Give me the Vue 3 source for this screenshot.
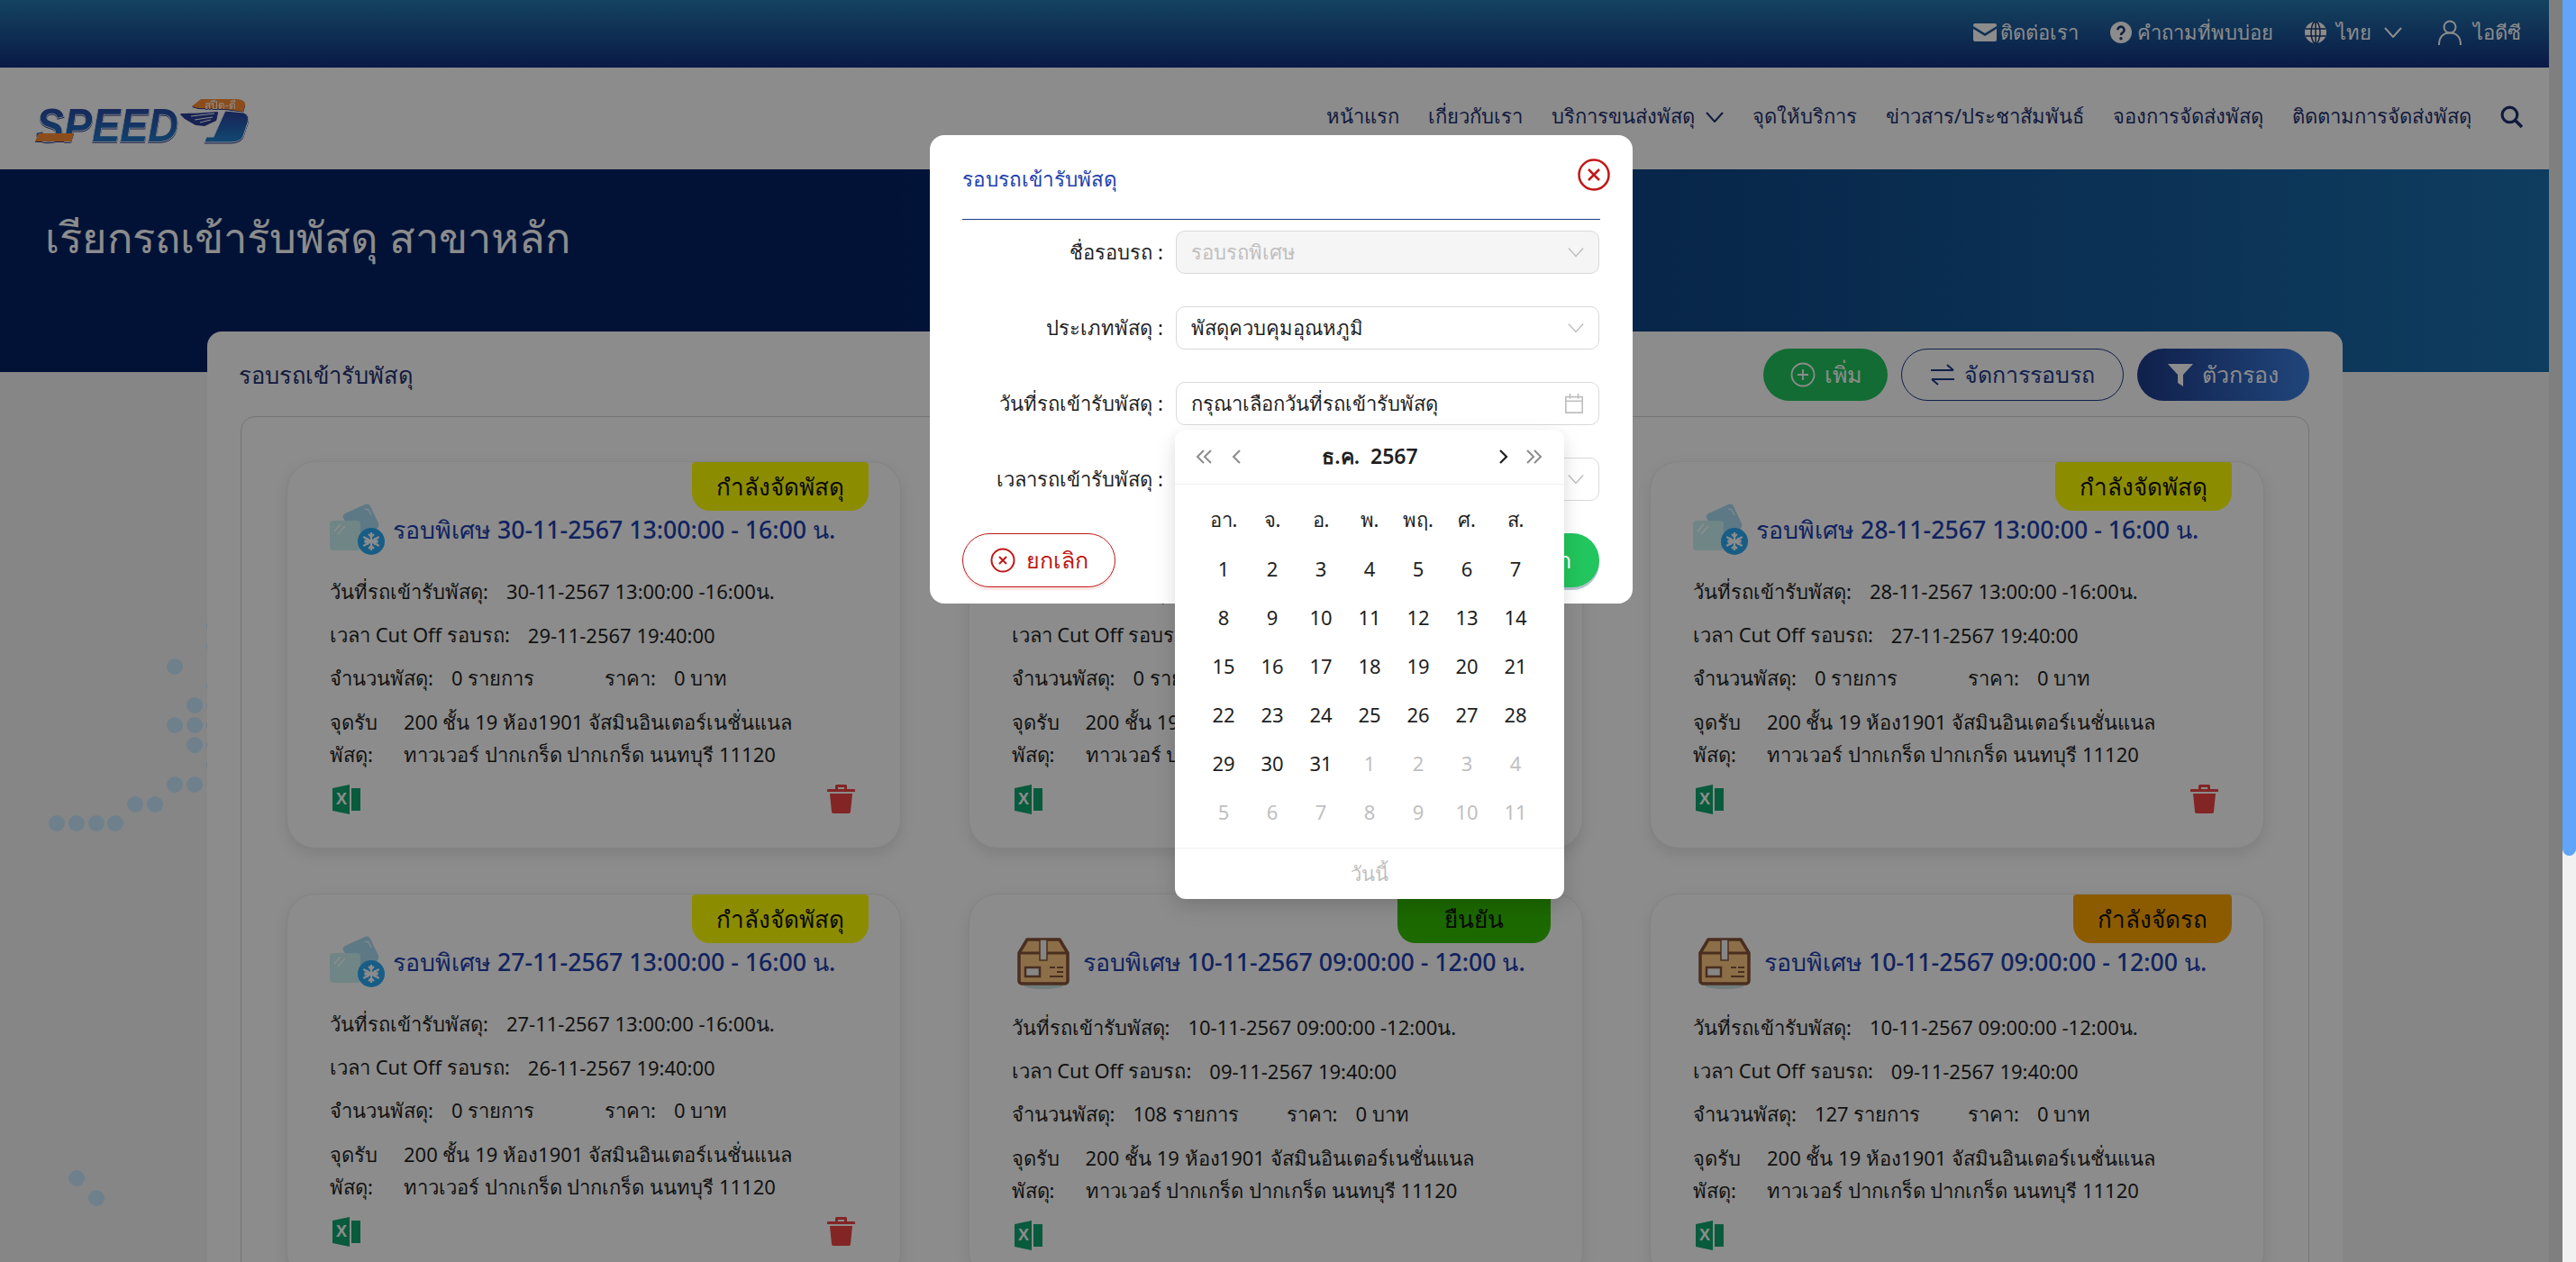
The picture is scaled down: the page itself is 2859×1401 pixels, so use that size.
<template>
  <div class="viewport">
    <div class="stage">
      <div class="page">
        <div class="topbar">
          <a class="top-link mail-link">
            <svg class="ic-mail" viewBox="0 0 26 20"><path fill="currentColor" d="M2 0h22a2 2 0 0 1 2 2v1L13 11 0 3V2a2 2 0 0 1 2-2zM0 6l13 8 13-8v12a2 2 0 0 1-2 2H2a2 2 0 0 1-2-2z"/></svg>
            <span>ติดต่อเรา</span>
          </a>
          <a class="top-link">
            <svg class="ic-top" viewBox="0 0 24 24"><circle cx="12" cy="12" r="12" fill="currentColor"/><path d="M8.400 9.200a3.600 3.600 0 1 1 5.600 3c-1.300.8-2 1.400-2 2.800" fill="none" stroke="#1a3a70" stroke-width="2.600"/><circle cx="12" cy="18.800" r="1.700" fill="#1a3a70"/></svg>
            <span>คำถามที่พบบ่อย</span>
          </a>
          <a class="top-link lang-link">
            <svg class="ic-top" viewBox="0 0 24 24"><circle cx="12" cy="12" r="12" fill="currentColor"/><g fill="none" stroke="#1a3a70" stroke-width="1.500"><ellipse cx="12" cy="12" rx="5" ry="12"/><path d="M12 0v24M1 8h22M1 16h22"/></g></svg>
            <span>ไทย</span>
            <svg class="ic-chev" viewBox="0 0 20 12"><path d="M1 1l9 10 9-10" fill="none" stroke="currentColor" stroke-width="2"/></svg>
          </a>
          <a class="top-link user-link">
            <svg class="ic-user" viewBox="0 0 26 28"><circle cx="13" cy="8" r="6.500" fill="none" stroke="currentColor" stroke-width="2"/><path d="M1 28c0-8 4-13.500 12-13.500S25 20 25 28" fill="none" stroke="currentColor" stroke-width="2"/></svg>
            <span>ไอดีซี</span>
          </a>
        </div>

        <header class="mainbar">
          <svg class="logo" viewBox="0 0 255 65">
            <defs>
              <linearGradient id="logoFill" x1="0" y1="0" x2="0" y2="1">
                <stop offset="0" stop-color="#2b3f9c"/>
                <stop offset="1" stop-color="#1f86d0"/>
              </linearGradient>
            </defs>
            <text class="logo-speed" x="10" y="56" textLength="158" lengthAdjust="spacingAndGlyphs" fill="url(#logoFill)" stroke="#fff" stroke-width="1.500">SPEED</text>
            <path d="M13 47h39l-3 9H9z" fill="#ff8c33"/>
            <path d="M183 17l10-8h37c8 0 13 2 12 7l-2 7-20-3-30-1z" fill="#ff8c33"/>
            <text class="logo-small" x="197" y="20" fill="#fff">สปีด-ดี</text>
            <path d="M220 22l20 2c6 2 6 6 5 11l-5 15c-2 5-8 7-14 7h-29l2-6h8l8-18z" fill="url(#logoFill)" stroke="#fff" stroke-width="1"/>
            <path d="M170 25c14 0 30-1 42-2l-2 9-13 6-10-1-12-7z" fill="#2b3f9c"/>
            <path d="M182 28l26-3M186 32l20-3M192 35l12-3" stroke="#fff" stroke-width="1" fill="none"/>
          </svg>
          <nav class="nav">
            <a>หน้าแรก</a>
            <a>เกี่ยวกับเรา</a>
            <a class="nav-drop">บริการขนส่งพัสดุ
              <svg class="ic-chev" viewBox="0 0 20 12"><path d="M1 1l9 10 9-10" fill="none" stroke="currentColor" stroke-width="2"/></svg>
            </a>
            <a>จุดให้บริการ</a>
            <a>ข่าวสาร/ประชาสัมพันธ์</a>
            <a>จองการจัดส่งพัสดุ</a>
            <a>ติดตามการจัดส่งพัสดุ</a>
            <svg class="ic-search" viewBox="0 0 24 24"><circle cx="10" cy="10" r="8" fill="none" stroke="currentColor" stroke-width="3"/><path d="M16 16l7 7" stroke="currentColor" stroke-width="3.500"/></svg>
          </nav>
        </header>

        <section class="hero">
          <h1>เรียกรถเข้ารับพัสดุ สาขาหลัก</h1>
        </section>

        <main class="content">
          <span v-for="(d, i) in dots" :key="i" class="dot" :style="{ left: d[0] + 'px', top: d[1] - 413 + 'px' }"></span>
          <div class="panel">
            <div class="panel-head">
              <div class="panel-title">รอบรถเข้ารับพัสดุ</div>
              <div class="actions">
                <button class="btn btn-add">
                  <svg class="ic-btn" viewBox="0 0 28 28"><circle cx="14" cy="14" r="12.500" fill="none" stroke="currentColor" stroke-width="1.800"/><path d="M14 8v12M8 14h12" stroke="currentColor" stroke-width="1.800"/></svg>
                  เพิ่ม
                </button>
                <button class="btn btn-manage">
                  <svg class="ic-btn" viewBox="0 0 28 28"><path d="M1 9h25M19 3l7 6M27 19H2M9 25l-7-6" fill="none" stroke="currentColor" stroke-width="2"/></svg>
                  จัดการรอบรถ
                </button>
                <button class="btn btn-filter">
                  <svg class="ic-btn" viewBox="0 0 28 28"><path d="M0 2h28L17 14v13l-6-4v-9z" fill="currentColor"/></svg>
                  ตัวกรอง
                </button>
              </div>
            </div>
            <div class="board">
              <article v-for="c in cards" :key="c.id" class="card" :class="c.kind === 'cold' ? 'card-cold' : 'card-box'">
                <div class="badge" :class="c.statusClass">{{ c.status }}</div>
                <div class="card-head">
                  <svg v-if="c.kind === 'cold'" class="ic-cold" viewBox="0 0 61 60">
                    <path d="M17 13l22-10c3-1 5 0 6 2l9 19c1 3 0 5-2 6L32 38c-3 1-5 0-6-2l-11-18c-1-2 0-4 2-5z" fill="#a9dcf5"/>
                    <path d="M39 8l4 1 3 6" fill="none" stroke="#e8f6ff" stroke-width="1.500"/>
                    <rect x="0" y="21" width="34" height="33" rx="4" fill="#cbf2f5"/>
                    <path d="M5 33l7-8M9 36l8-9" stroke="#fff" stroke-width="1.800"/>
                    <circle cx="46" cy="44" r="15" fill="#2da9f5"/>
                    <g stroke="#fff" stroke-width="2.200" fill="none">
                      <path d="M46 34v20M37.300 39l17.400 10M54.700 39l-17.400 10"/>
                      <path d="M43 36l3 3 3-3M43 52l3-3 3 3M38.500 43l4 1-1-4M53.500 43l-4 1 1-4M38.500 45l4-1-1 4M53.500 45l-4-1 1 4"/>
                    </g>
                  </svg>
                  <svg v-else class="ic-box" viewBox="0 0 58 57">
                    <ellipse cx="29" cy="53" rx="22" ry="4" fill="#cde0e0"/>
                    <path d="M11 2h36l9 15v31a3 3 0 0 1-3 3H5a3 3 0 0 1-3-3V17z" fill="#ffc884" stroke="#875539" stroke-width="3.500" stroke-linejoin="round"/>
                    <path d="M2 17h54" stroke="#875539" stroke-width="3"/>
                    <rect x="25" y="2" width="8" height="23" fill="#f4f4f4" stroke="#875539" stroke-width="1.500"/>
                    <rect x="9" y="33" width="16" height="10" fill="#f4f4f4" stroke="#875539" stroke-width="2.500"/>
                    <path d="M36 33h6M44 33h7M44 38h7M36 43h15" stroke="#875539" stroke-width="2"/>
                  </svg>
                  <h3 class="card-title">{{ c.title }}</h3>
                </div>
                <p class="row"><span>วันที่รถเข้ารับพัสดุ:</span><span class="val">{{ c.date }}</span></p>
                <p class="row"><span>เวลา Cut Off รอบรถ:</span><span class="val">{{ c.cutoff }}</span></p>
                <p class="row row-split">
                  <span class="qty"><span>จำนวนพัสดุ:</span><span class="val">{{ c.qty }} รายการ</span></span>
                  <span>ราคา:</span><span class="val">0 บาท</span>
                </p>
                <div class="addr">
                  <span>จุดรับ</span><span>200 ชั้น 19 ห้อง1901 จัสมินอินเตอร์เนชั่นแนล</span>
                  <span>พัสดุ:</span><span>ทาวเวอร์ ปากเกร็ด ปากเกร็ด นนทบุรี 11120</span>
                </div>
                <div class="card-foot">
                  <svg class="ic-xls" viewBox="0 0 31 33">
                    <path d="M0 4l19-4v33L0 29z" fill="#12a76f"/>
                    <path d="M21 4h10v25H21z" fill="#12a76f"/>
                    <text class="xls-x" x="4" y="22" fill="#fff">X</text>
                  </svg>
                  <svg v-if="c.trash" class="ic-trash" viewBox="0 0 31 32">
                    <path d="M9 5V1.500A1.500 1.500 0 0 1 10.500 0h10A1.500 1.500 0 0 1 22 1.500V5h8a1 1 0 0 1 1 1v2H0V6a1 1 0 0 1 1-1zm3-2v2h7V3z" fill="#ef4444"/>
                    <path d="M3 10h25l-2 20a2 2 0 0 1-2 2H7a2 2 0 0 1-2-2z" fill="#ef4444"/>
                  </svg>
                </div>
              </article>
            </div>
          </div>
        </main>
      </div>

      <div class="overlay"></div>

      <div class="modal">
        <div class="modal-head">
          <div class="modal-title">รอบรถเข้ารับพัสดุ</div>
          <svg class="ic-close" viewBox="0 0 36 36"><circle cx="18" cy="18" r="16.500" fill="none" stroke="#c01818" stroke-width="2.500"/><path d="M12 12l12 12M24 12L12 24" stroke="#c01818" stroke-width="2.500"/></svg>
        </div>
        <div class="form">
          <div class="form-row">
            <label>ชื่อรอบรถ :</label>
            <div class="field disabled"><span>รอบรถพิเศษ</span><svg class="ic-field" viewBox="0 0 20 12"><path d="M1 1l9 10 9-10" fill="none" stroke="#bfbfbf" stroke-width="1.600"/></svg></div>
          </div>
          <div class="form-row">
            <label>ประเภทพัสดุ :</label>
            <div class="field"><span>พัสดุควบคุมอุณหภูมิ</span><svg class="ic-field" viewBox="0 0 20 12"><path d="M1 1l9 10 9-10" fill="none" stroke="#bfbfbf" stroke-width="1.600"/></svg></div>
          </div>
          <div class="form-row">
            <label>วันที่รถเข้ารับพัสดุ :</label>
            <div class="field"><span>กรุณาเลือกวันที่รถเข้ารับพัสดุ</span><svg class="ic-cal" viewBox="0 0 22 24"><path d="M1 4h20v19H1zM1 9h20M6 0v6M16 0v6" fill="none" stroke="#bfbfbf" stroke-width="1.800"/></svg></div>
          </div>
          <div class="form-row">
            <label>เวลารถเข้ารับพัสดุ :</label>
            <div class="field"><span></span><svg class="ic-field" viewBox="0 0 20 12"><path d="M1 1l9 10 9-10" fill="none" stroke="#bfbfbf" stroke-width="1.600"/></svg></div>
          </div>
        </div>
        <div class="modal-foot">
          <button class="btn-cancel">
            <svg class="ic-cancel" viewBox="0 0 28 28"><circle cx="14" cy="14" r="12.500" fill="none" stroke="#c01818" stroke-width="2"/><path d="M10 10l8 8M18 10l-8 8" stroke="#c01818" stroke-width="2"/></svg>
            ยกเลิก
          </button>
          <button class="btn-save">บันทึก</button>
        </div>

        <div class="picker">
          <div class="picker-head">
            <svg class="arr arr-dbl" viewBox="0 0 19 16"><path d="M9 1L2 8l7 7M17 1l-7 7 7 7" fill="none" stroke="#8c8c8c" stroke-width="2"/></svg>
            <svg class="arr arr-one" viewBox="0 0 10 16"><path d="M9 1L2 8l7 7" fill="none" stroke="#8c8c8c" stroke-width="2"/></svg>
            <div class="picker-title">ธ.ค.&nbsp;&nbsp;2567</div>
            <svg class="arr arr-one" viewBox="0 0 10 16"><path d="M1 1l7 7-7 7" fill="none" stroke="#1f1f1f" stroke-width="2.200"/></svg>
            <svg class="arr arr-dbl last" viewBox="0 0 19 16"><path d="M2 1l7 7-7 7M10 1l7 7-7 7" fill="none" stroke="#8c8c8c" stroke-width="2"/></svg>
          </div>
          <div class="picker-grid">
            <div v-for="w in weekdays" :key="w" class="cell">{{ w }}</div>
            <div v-for="(d, i) in days" :key="i" class="cell" :class="{ muted: d.muted }">{{ d.n }}</div>
          </div>
          <div class="picker-foot">วันนี้</div>
        </div>
      </div>
    </div>
    <div class="scrollbar"><div class="thumb"></div></div>
  </div>
</template>

<script setup>
const weekdays = ['อา.', 'จ.', 'อ.', 'พ.', 'พฤ.', 'ศ.', 'ส.']

const days = []
for (let n = 1; n <= 31; n++) days.push({ n, muted: false })
for (let n = 1; n <= 11; n++) days.push({ n, muted: true })

const cards = [
  { id: 1, kind: 'cold', status: 'กำลังจัดพัสดุ', statusClass: 'st-yellow', title: 'รอบพิเศษ 30-11-2567 13:00:00 - 16:00 น.', date: '30-11-2567 13:00:00 -16:00น.', cutoff: '29-11-2567 19:40:00', qty: 0, trash: true },
  { id: 2, kind: 'cold', status: 'กำลังจัดพัสดุ', statusClass: 'st-yellow', title: 'รอบพิเศษ 29-11-2567 13:00:00 - 16:00 น.', date: '29-11-2567 13:00:00 -16:00น.', cutoff: '28-11-2567 19:40:00', qty: 0, trash: true },
  { id: 3, kind: 'cold', status: 'กำลังจัดพัสดุ', statusClass: 'st-yellow', title: 'รอบพิเศษ 28-11-2567 13:00:00 - 16:00 น.', date: '28-11-2567 13:00:00 -16:00น.', cutoff: '27-11-2567 19:40:00', qty: 0, trash: true },
  { id: 4, kind: 'cold', status: 'กำลังจัดพัสดุ', statusClass: 'st-yellow', title: 'รอบพิเศษ 27-11-2567 13:00:00 - 16:00 น.', date: '27-11-2567 13:00:00 -16:00น.', cutoff: '26-11-2567 19:40:00', qty: 0, trash: true },
  { id: 5, kind: 'box', status: 'ยืนยัน', statusClass: 'st-green', title: 'รอบพิเศษ 10-11-2567 09:00:00 - 12:00 น.', date: '10-11-2567 09:00:00 -12:00น.', cutoff: '09-11-2567 19:40:00', qty: 108, trash: false },
  { id: 6, kind: 'box', status: 'กำลังจัดรถ', statusClass: 'st-orange', title: 'รอบพิเศษ 10-11-2567 09:00:00 - 12:00 น.', date: '10-11-2567 09:00:00 -12:00น.', cutoff: '09-11-2567 19:40:00', qty: 127, trash: false }
]

// decorative dots behind the panel (left edge of the page)
const dots = [
  [194, 740], [216, 783], [194, 805], [216, 805], [216, 827], [194, 871], [216, 871],
  [150, 893], [172, 893], [63, 914], [85, 914], [107, 914], [128, 914], [85, 1308], [107, 1330],
  [238, 695], [238, 718], [238, 762], [238, 783], [238, 805], [238, 827], [238, 849]
]
</script>

<style>
html, body {
  margin: 0;
  overflow: hidden;
}
</style>

<style scoped>
* {
  box-sizing: border-box;
}
.viewport {
  display: flex;
  height: 100vh;
  overflow: hidden;
  font-family: "Noto Sans", "Open Sans", sans-serif;
  color: #1f1f1f;
}
.stage {
  flex: 1;
  position: relative;
  overflow: hidden;
  background: #e8e8e8;
}
.scrollbar {
  width: 15px;
  background: #f1f1f1;
}
.thumb {
  height: 950px;
  background: #60a5fa;
  border-radius: 0 0 8px 8px;
}
.page {
  width: 2829px;
  height: 100%;
  background: #f5f5f5;
}

/* top bar */
.topbar {
  height: 75px;
  padding: 0 31px 3px 0;
  display: flex;
  justify-content: flex-end;
  align-items: center;
  gap: 35px;
  color: #fff;
  font-size: 22px;
  background: linear-gradient(180deg, #257aaf 0%, #123080 100%);
}
.top-link {
  display: flex;
  align-items: center;
  gap: 6px;
}
.mail-link {
  gap: 4px;
}
.lang-link {
  gap: 11px;
}
.user-link {
  gap: 13px;
  margin-left: 5px;
}
.ic-mail {
  width: 26px;
  height: 20px;
}
.ic-top {
  width: 24px;
  height: 24px;
}
.ic-chev {
  width: 20px;
  height: 12px;
  margin-left: 12px;
}
.lang-link .ic-chev {
  margin-left: 3px;
}
.ic-user {
  width: 26px;
  height: 28px;
}

/* main nav */
.mainbar {
  height: 113px;
  background: #fff;
  display: flex;
  align-items: center;
  justify-content: space-between;
  padding: 0 29px 0 30px;
}
.logo {
  width: 255px;
  height: 65px;
  margin-top: 3px;
  overflow: visible;
  filter: drop-shadow(0 1px 0 #2b3a8a);
}
.logo-speed {
  font: italic 700 52px "Liberation Sans", sans-serif;
  paint-order: stroke;
}
.logo-small {
  font: 12px "Noto Sans", sans-serif;
}
.nav {
  display: flex;
  align-items: center;
  gap: 32px;
  margin-bottom: 4px;
  font-size: 22px;
  color: #1e3070;
}
.nav-drop {
  display: flex;
  align-items: center;
}
.ic-search {
  width: 25px;
  height: 25px;
}

/* hero */
.hero {
  height: 225px;
  padding: 43px 0 0 50px;
  background: linear-gradient(90deg, #032263 0%, #032263 35%, #1b6fae 100%);
  color: #fff;
}
.hero h1 {
  margin: 0;
  font-size: 47px;
  font-weight: 400;
  line-height: 64px;
}

/* content */
.content {
  position: relative;
  height: 1000px;
}
.dot {
  position: absolute;
  width: 18px;
  height: 18px;
  margin: -9px 0 0 -9px;
  border-radius: 50%;
  background: #c8e9ff;
}
.panel {
  position: relative;
  width: 2370px;
  margin-left: 230px;
  top: -45px;
  background: #fff;
  border-radius: 16px 16px 0 0;
  padding: 0 37px;
}
.panel-head {
  height: 94px;
  display: flex;
  align-items: flex-start;
  justify-content: space-between;
}
.panel-title {
  margin: 28px 0 0 -2px;
  font-size: 25.500px;
  line-height: 40px;
  color: #1e3070;
}
.actions {
  display: flex;
  gap: 15px;
  margin-top: 19px;
}
.btn {
  height: 58px;
  border-radius: 29px;
  border: none;
  display: flex;
  align-items: center;
  justify-content: center;
  gap: 10px;
  font: inherit;
  font-size: 25px;
  color: #fff;
}
.ic-btn {
  width: 28px;
  height: 28px;
}
.btn-add {
  width: 138px;
  background: #22c55e;
}
.btn-manage {
  width: 247px;
  background: #fff;
  color: #1e3a8a;
  border: 1.500px solid #1e3a8a;
}
.btn-filter {
  width: 191px;
  background: linear-gradient(90deg, #1e3a8a, #3b7fe0);
}
.board {
  border: 1px solid #d1d5db;
  border-radius: 16px;
  padding: 49px 50px;
  display: grid;
  grid-template-columns: repeat(3, 682px);
  column-gap: 74.500px;
  row-gap: 50px;
}

/* card */
.card {
  position: relative;
  height: 430px;
  padding: 44px 50px 0 47px;
  background: #fff;
  border: 1px solid #eee;
  border-radius: 32px;
  box-shadow: 0 6px 16px rgba(0, 0, 0, 0.1);
  font-size: 22px;
  color: #1f1f1f;
}
.badge {
  position: absolute;
  top: 0;
  right: 35px;
  min-width: 170px;
  height: 54px;
  padding: 0 27px;
  border-radius: 4px 4px 20px 20px;
  display: flex;
  align-items: center;
  justify-content: center;
  font-size: 26px;
  color: #111;
}
.st-yellow {
  background: #ffff00;
}
.st-green {
  background: #33bf00;
}
.st-orange {
  background: #ffa600;
}
.card-head {
  display: flex;
  align-items: flex-start;
}
.card-cold .card-head {
  height: 60px;
}
.card-box .card-head {
  height: 64px;
}
.ic-cold {
  width: 61px;
  height: 60px;
  margin-right: 9px;
}
.ic-box {
  width: 58px;
  height: 57px;
  margin: 4px 15px 0 6px;
}
.card-title {
  margin: 11px 0 0;
  font-size: 26.700px;
  font-weight: 500;
  line-height: 40px;
  color: #1e40af;
  white-space: nowrap;
}
.row {
  margin: 0;
  height: 48px;
  display: flex;
  align-items: center;
  white-space: nowrap;
}
.card-head + .row {
  margin-top: 16px;
}
.val {
  margin-left: 20px;
}
.qty {
  width: 305px;
  display: flex;
}
.addr {
  margin-top: 6px;
  display: grid;
  grid-template-columns: 82px 1fr;
  line-height: 36px;
  white-space: nowrap;
}
.card-foot {
  margin-top: 16px;
  display: flex;
  justify-content: space-between;
}
.ic-xls {
  width: 31px;
  height: 33px;
  margin-left: 3px;
}
.xls-x {
  font: 700 18px "Liberation Sans", sans-serif;
}
.ic-trash {
  width: 31px;
  height: 32px;
}

/* modal */
.overlay {
  position: absolute;
  inset: 0;
  background: rgba(0, 0, 0, 0.45);
}
.modal {
  position: absolute;
  left: 1032px;
  top: 150px;
  width: 780px;
  height: 520px;
  padding: 0 36px;
  background: #fff;
  border-radius: 16px;
  font-size: 22px;
}
.modal-head {
  height: 94px;
  border-bottom: 1px solid #1e3a8a;
  position: relative;
}
.modal-title {
  padding-top: 29px;
  line-height: 40px;
  font-size: 22.500px;
  color: #1e40af;
}
.ic-close {
  position: absolute;
  right: -11px;
  top: 26px;
  width: 36px;
  height: 36px;
}
.form {
  margin-top: 12px;
  display: flex;
  flex-direction: column;
  gap: 36px;
}
.form-row {
  height: 48px;
  display: flex;
  align-items: center;
  gap: 14px;
}
.form-row label {
  width: 223px;
  text-align: right;
  white-space: nowrap;
}
.field {
  width: 470px;
  height: 48px;
  margin-right: -1px;
  border: 1px solid #d9d9d9;
  border-radius: 10px;
  padding: 0 16px;
  display: flex;
  align-items: center;
  justify-content: space-between;
  background: #fff;
}
.field.disabled {
  background: #f5f5f5;
  color: #bfbfbf;
}
.ic-field {
  width: 18px;
  height: 12px;
}
.ic-cal {
  width: 22px;
  height: 22px;
}
.modal-foot {
  position: absolute;
  left: 36px;
  right: 37px;
  top: 442px;
  display: flex;
  justify-content: space-between;
}
.btn-cancel {
  width: 170px;
  height: 60px;
  display: flex;
  align-items: center;
  justify-content: center;
  gap: 12px;
  border: 1px solid #c01818;
  border-radius: 30px;
  background: #fff;
  color: #c01818;
  font: inherit;
  font-size: 25px;
  box-shadow: 0 3px 0 #fde8e8;
}
.ic-cancel {
  width: 28px;
  height: 28px;
}
.btn-save {
  width: 170px;
  height: 60px;
  padding-right: 31px;
  border: none;
  border-radius: 30px;
  background: #22c55e;
  color: #fff;
  font: inherit;
  font-size: 25px;
  text-align: right;
  box-shadow: 0 3px 0 #b4c4d0;
}

/* date picker */
.picker {
  position: absolute;
  left: 272px;
  top: 327px;
  width: 432px;
  height: 521px;
  background: #fff;
  border-radius: 12px;
  box-shadow: 0 9px 28px rgba(0, 0, 0, 0.08), 0 6px 16px rgba(0, 0, 0, 0.08);
  z-index: 2;
}
.picker-head {
  height: 61px;
  padding: 0 24px 0 23px;
  display: flex;
  align-items: center;
  border-bottom: 1px solid #f0f0f0;
}
.arr {
  height: 16px;
}
.arr-dbl {
  width: 19px;
}
.arr-one {
  width: 10px;
}
.arr-dbl + .arr-one {
  margin-left: 21px;
}
.arr-one + .arr-dbl {
  margin-left: 19px;
}
.picker-title {
  flex: 1;
  text-align: center;
  font-size: 23px;
  font-weight: 600;
}
.picker-grid {
  padding: 0 27px;
  margin-top: 12px;
  height: 391px;
  display: grid;
  grid-template-columns: repeat(7, 54px);
  grid-auto-rows: 54px;
}
.cell {
  display: flex;
  align-items: center;
  justify-content: center;
  font-size: 22px;
}
.cell.muted {
  color: #bfbfbf;
}
.picker-foot {
  height: 57px;
  border-top: 1px solid #f0f0f0;
  display: flex;
  align-items: center;
  justify-content: center;
  color: #bfbfbf;
  font-size: 22px;
}
</style>
